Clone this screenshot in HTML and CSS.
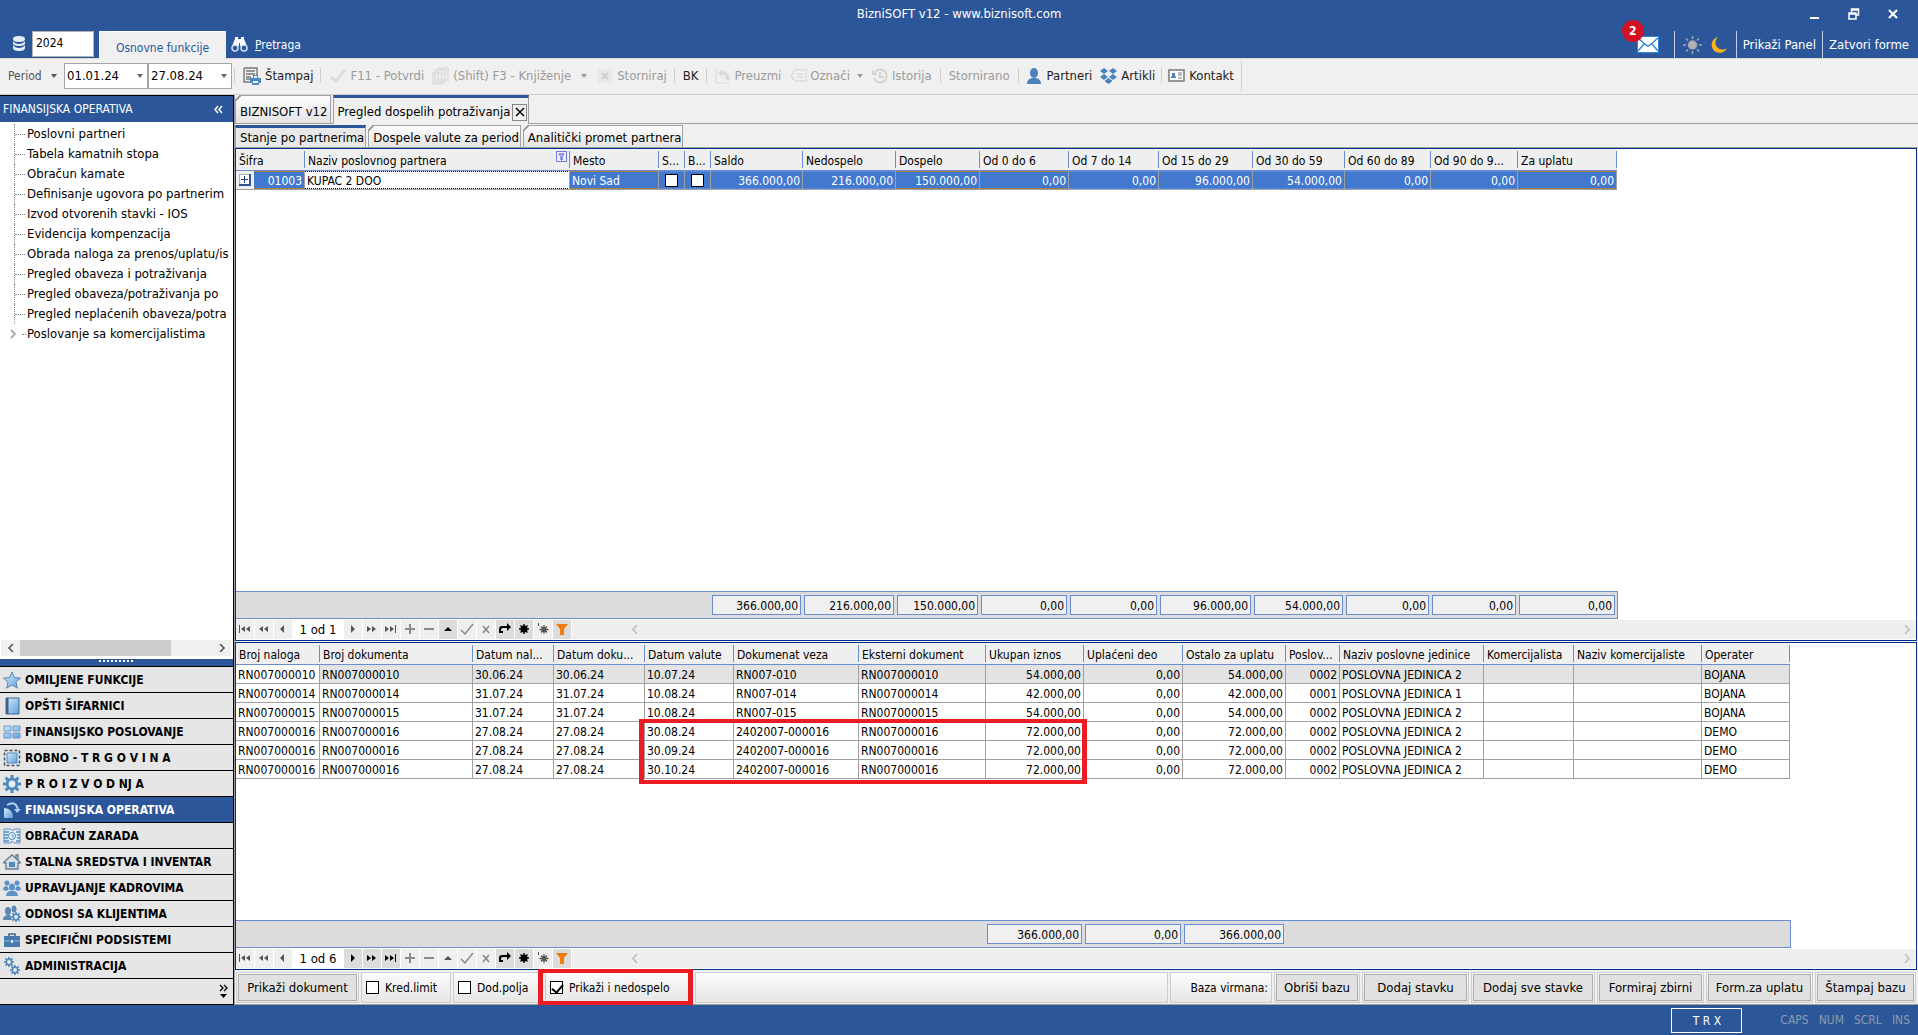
FILE: index.html
```html
<!DOCTYPE html>
<html lang="sr-Latn">
<head>
<meta charset="utf-8">
<title>BizniSOFT v12</title>
<link rel="stylesheet" href="styles.css">
</head>
<body>
<svg class="defs" aria-hidden="true">
  <defs>
    <linearGradient id="sky" x1="0" y1="0" x2="1" y2="1"><stop offset="0" stop-color="#d5eafb"/><stop offset="1" stop-color="#5d9fdc"/></linearGradient>
    <symbol id="n-first" viewBox="0 0 18 19"><path d="M3 5h1v8H3zM9 6v6L5 9zM14 6v6l-4-3z"/></symbol>
    <symbol id="n-pprev" viewBox="0 0 18 19"><path d="M8 6v6L4 9zM13 6v6L9 9z"/></symbol>
    <symbol id="n-prev" viewBox="0 0 18 19"><path d="M10 5v8L6 9z"/></symbol>
    <symbol id="n-next" viewBox="0 0 18 19"><path d="M7 5v8l4-4z"/></symbol>
    <symbol id="n-nnext" viewBox="0 0 18 19"><path d="M4 6v6l4-3zM9 6v6l4-3z"/></symbol>
    <symbol id="n-last" viewBox="0 0 18 19"><path d="M3 6v6l4-3zM8 6v6l4-3zM13 5h1v8h-1z"/></symbol>
    <symbol id="n-add" viewBox="0 0 18 19"><path d="M8 4h2v4h4v2h-4v4H8v-4H4V8h4z"/></symbol>
    <symbol id="n-del" viewBox="0 0 18 19"><path d="M4 8h10v2H4z"/></symbol>
    <symbol id="n-edit" viewBox="0 0 18 19"><path d="M5 11l4-4 4 4z"/></symbol>
    <symbol id="n-ok" viewBox="0 0 18 19"><path d="M3 10l4 4 8-10" fill="none" stroke="currentColor" stroke-width="1.5"/></symbol>
    <symbol id="n-x" viewBox="0 0 18 19"><path d="M6 6l6 7M12 6l-6 7" fill="none" stroke="currentColor" stroke-width="1.6"/></symbol>
    <symbol id="n-ref" viewBox="0 0 18 19"><path d="M3 13V9q0-3 3-3h5V3l4 4-4 4V8H7Q5 8 5 10v1h2v2z"/></symbol>
    <symbol id="n-star" viewBox="0 0 18 19"><path d="M9 4v10M4 9h10M5.500 5.500l7 7M12.500 5.500l-7 7" stroke="currentColor" stroke-width="1.4"/><circle cx="9" cy="9" r="3.500"/></symbol>
    <symbol id="n-goto" viewBox="0 0 18 19"><path d="M10 5v9M5.500 9.500h9M7 6.500l6 6M13 6.500l-6 6" stroke="currentColor" stroke-width="1.300"/><circle cx="10" cy="9.500" r="2.500"/><path d="M4 3h1v3H4z"/></symbol>
    <symbol id="n-flt" viewBox="0 0 18 19"><path d="M3 4h12l-4 5v6H7V9z" fill="#f07a10"/></symbol>
    <symbol id="gear" viewBox="0 0 18 18"><path d="M9 0v18M0 9h18M2.600 2.600l12.800 12.800M15.400 2.600L2.600 15.400" stroke="#4f89c0" stroke-width="3"/><circle cx="9" cy="9" r="4.800" fill="#e9eef3" stroke="#4f89c0" stroke-width="2.800"/></symbol>
    <symbol id="drop" viewBox="0 0 6 4"><path d="M0 0h6L3 4z" fill="currentColor"/></symbol>
  </defs>
</svg>
<div class="app">
  <header class="titlebar">
    <div class="caption">
      <h1>BizniSOFT v12 - www.biznisoft.com</h1>
      <div class="winbtns">
        <button type="button" aria-label="Minimize"><svg width="12" height="12"><path d="M1 9h9v2H1z" fill="#fff"/></svg></button>
        <button type="button" aria-label="Restore"><svg width="12" height="12" fill="none" stroke="#fff" stroke-width="1.500"><path d="M1 5h7v6H1zM1 6h7M3.500 4V1h7v6H8M3.500 2h7"/></svg></button>
        <button type="button" aria-label="Close"><svg width="12" height="12"><path d="M2 2l8 8M10 2l-8 8" stroke="#fff" stroke-width="2.200"/></svg></button>
      </div>
    </div>
    <div class="ribbon">
      <svg class="db" width="14" height="16" fill="#e8eef7"><path d="M1 3q0-3 6-3t6 3-6 3-6-3zM1 5q2 3 6 3t6-3v2q0 3-6 3T1 7zM1 9q2 3 6 3t6-3v3q0 3-6 3t-6-3z"/></svg>
      <select class="year" aria-label="Godina"><option>2024</option></select>
      <a class="rtab" href="#">Osnovne funkcije</a>
      <a class="search" href="#"><svg width="17" height="16" fill="#fff"><path d="M4 2V0h3v2h3V0h3v2l3 7H9V6H8v3H1z"/><circle cx="4" cy="11" r="3" fill="none" stroke="#c9dcf3" stroke-width="1.600"/><circle cx="13" cy="11" r="3" fill="none" stroke="#c9dcf3" stroke-width="1.600"/></svg><span><u>P</u>retraga</span></a>
      <div class="rright">
        <button type="button" class="mail" aria-label="Poruke"><svg width="22" height="17"><path d="M0 0h22v17H0z" fill="#2f86dd"/><path d="M1 1h20v15H1z" fill="#fff"/><path d="M1 2l8 7q2 2 4 0l8-7M1 15l6-7M21 15l-6-7" fill="none" stroke="#2f86dd" stroke-width="1.400"/></svg><span class="badge">2</span></button>
        <div class="theme">
          <svg width="19" height="18" stroke="#a5a9ad" stroke-width="1.500"><path d="M9.500 0v3M9.500 15v3M0 9h3M16 9h3M3 2.500l2 2M14 13.500l2 2M16 2.500l-2 2M5 13.500l-2 2"/><circle cx="9.500" cy="9" r="4" fill="#b3b3b3"/></svg>
          <svg width="17" height="16"><path d="M7 0A8 8 0 1 0 16 11A7 7 0 0 1 7 0z" fill="#fbb117"/></svg>
        </div>
        <button type="button" class="rbtn">Prikaži Panel</button>
        <button type="button" class="rbtn">Zatvori forme</button>
      </div>
    </div>
  </header>

  <div class="toolbar">
    <button type="button" class="period">Period <svg width="6" height="4"><use href="#drop"/></svg></button>
    <label class="date"><input type="text" value="01.01.24" aria-label="Od datuma"><svg width="6" height="4"><use href="#drop"/></svg></label>
    <label class="date"><input type="text" value="27.08.24" aria-label="Do datuma"><svg width="6" height="4"><use href="#drop"/></svg></label>
    <i class="sep"></i>
    <button type="button" class="t-stampaj"><svg width="18" height="18"><path d="M1 1h13v9M8 15H1V1" fill="none" stroke="#777" stroke-width="1.400"/><path d="M3 4h9M3 7h9M3 10h5M3 12h4" stroke="#777" stroke-width="1.400"/><path d="M10 8h5v3h3v5h-2v2H9v-2H7v-5h3z" fill="#4f89c0"/><path d="M11 9h3v2h-3zM10 14h5v2h-5z" fill="#eef4fa"/></svg>Štampaj</button>
    <i class="sep"></i>
    <button type="button" class="off t-potvrdi"><svg width="16" height="14"><path d="M1 8l5 4 9-11" fill="none" stroke="#dcdcdc" stroke-width="3"/></svg>F11 - Potvrdi</button>
    <button type="button" class="off t-knj"><svg width="17" height="18" fill="#f1f1f1" stroke="#dcdcdc" stroke-width="1.500"><path d="M6 1h10v12H6zM3 3h10v12H3zM1 6h9v11H1z"/></svg>(Shift) F3 - Knjiženje<svg class="dd" width="6" height="4"><use href="#drop"/></svg></button>
    <button type="button" class="off t-storn"><svg width="16" height="16"><path d="M1 1h14v14H1z" fill="#e8e8e8"/><path d="M5 5l6 6M11 5l-6 6" stroke="#cfcfcf" stroke-width="2"/></svg>Storniraj</button>
    <i class="sep"></i>
    <button type="button" class="t-bk">BK</button>
    <i class="sep"></i>
    <button type="button" class="off t-preuzmi"><svg width="16" height="16" fill="none" stroke="#dadada"><path d="M1 1v14h14"/><path d="M5 5q7-1 8 5" stroke-width="3"/><path d="M3 5l4-4v8zM9 9h7l-3 4z" fill="#dadada" stroke="none"/></svg>Preuzmi</button>
    <button type="button" class="off t-oznaci"><svg width="17" height="13" fill="none" stroke="#dcdcdc" stroke-width="1.500"><path d="M5 1h11v11H5L1 6.500zM7 5h6M7 8h6"/></svg>Označi<svg class="dd" width="6" height="4"><use href="#drop"/></svg></button>
    <button type="button" class="off t-ist"><svg width="16" height="16" fill="none" stroke="#d2d2d2" stroke-width="2"><path d="M3 4a6.500 6.500 0 1 1-1 6M8 4v5h4"/><path d="M0 2l6 5H0z" fill="#d2d2d2" stroke="none"/></svg>Istorija</button>
    <i class="sep"></i>
    <button type="button" class="off t-storno">Stornirano</button>
    <i class="sep"></i>
    <button type="button" class="t-part"><svg width="14" height="16" fill="#4a83bb"><ellipse cx="7" cy="5" rx="4" ry="5"/><path d="M0 16q0-5 5-6h4q5 1 5 6z"/></svg>Partneri</button>
    <button type="button" class="t-art"><svg width="17" height="16" fill="#4a83bb"><path d="M4 0l4 3-4 3-4-3zM13 0l4 3-4 3-4-3zM4 6l4 3-4 3-4-3zM13 6l4 3-4 3-4-3zM8.500 10l4 3-4 3-4-3z"/></svg>Artikli</button>
    <i class="sep"></i>
    <button type="button" class="t-kont"><svg width="17" height="13"><path d="M1 1h15v11H1z" fill="#fff" stroke="#777" stroke-width="1.500"/><path d="M3 9q0-2 1-2V4h3v3q1 0 1 2z" fill="#4a83bb"/><path d="M10 4h4M10 6h4M10 9h4" stroke="#777"/></svg>Kontakt</button>
    <i class="sep tall"></i>
  </div>

  <div class="work">
    <aside class="side">
      <h2>FINANSIJSKA OPERATIVA <svg width="9" height="9" fill="none" stroke="#fff" stroke-width="1.500"><path d="M4 1L1 4.500 4 8M8 1L5 4.500 8 8"/></svg></h2>
      <ul class="tree">
        <li><a href="#">Poslovni partneri</a></li>
        <li><a href="#">Tabela kamatnih stopa</a></li>
        <li><a href="#">Obračun kamate</a></li>
        <li><a href="#">Definisanje ugovora po partnerim</a></li>
        <li><a href="#">Izvod otvorenih stavki - IOS</a></li>
        <li><a href="#">Evidencija kompenzacija</a></li>
        <li><a href="#">Obrada naloga za prenos/uplatu/is</a></li>
        <li><a href="#">Pregled obaveza i potraživanja</a></li>
        <li><a href="#">Pregled obaveza/potraživanja po</a></li>
        <li><a href="#">Pregled neplaćenih obaveza/potra</a></li>
        <li class="node"><svg width="6" height="10"><path d="M1 1l4 4-4 4" fill="none" stroke="#aaa" stroke-width="1.800"/></svg><a href="#">Poslovanje sa komercijalistima</a></li>
      </ul>
      <div class="hscroll"><svg width="7" height="8"><path d="M6 0L2 4l4 4" fill="none" stroke="#555" stroke-width="1.600"/></svg><i></i><svg width="7" height="8"><path d="M1 0l4 4-4 4" fill="none" stroke="#555" stroke-width="1.600"/></svg></div>
      <div class="grip"><i></i></div>
      <nav class="groups">
        <button type="button"><svg width="18" height="18"><path d="M9 1l2.500 5.500 6 .6-4.500 4 1.300 6L9 14l-5.300 3.100L5 11.100.5 7.100l6-.6z" fill="url(#sky)" stroke="#5b86ae"/></svg>OMILJENE FUNKCIJE</button>
        <button type="button"><svg width="18" height="18"><path d="M3 1h13v16H3z" fill="url(#sky)" stroke="#456a8e"/><path d="M3 1h2.500v16H3z" fill="#3d6186"/></svg>OPŠTI ŠIFARNICI</button>
        <button type="button"><svg width="18" height="18" fill="url(#sky)" stroke="#6d9bc8"><path d="M1 3h7v5H1zM10 3h7v5h-7zM1 10h7v5H1zM10 10h7v5h-7z"/></svg>FINANSIJSKO POSLOVANJE</button>
        <button type="button"><svg width="18" height="18"><path d="M1.500 1.500h15v15h-15z" fill="none" stroke="#444e5a" stroke-width="1.500" stroke-dasharray="3 2"/><path d="M4 4h10v10H4z" fill="url(#sky)" stroke="#4f8ac4"/></svg>ROBNO - T R G O V I N A</button>
        <button type="button"><svg width="18" height="18"><use href="#gear"/></svg>P R O I Z V O D NJ A</button>
        <button type="button" class="on"><svg width="18" height="18"><path d="M1 7q9 0 9 10H1z" fill="url(#sky)"/><path d="M4 4q9-5 11 5" fill="none" stroke="#a9d1f3" stroke-width="2"/><path d="M11 8h7l-4 4z" fill="#a9d1f3"/></svg>FINANSIJSKA OPERATIVA</button>
        <button type="button"><svg width="18" height="18"><path d="M1 2h7l2 2 1-2h6v14h-6l-2-2-1 2H1z" fill="#dcecf9" stroke="#6d94b8"/><path d="M1 5h5M1 8h4M1 11h4M1 14h5M13 5h4M14 8h3M14 11h3M13 14h4" stroke="#4f89c0" stroke-width="1.500"/><circle cx="9" cy="9" r="3.500" fill="#f5f9fd" stroke="#4f89c0"/><path d="M8 8h2v3" fill="none" stroke="#4f89c0"/></svg>OBRAČUN ZARADA</button>
        <button type="button"><svg width="18" height="18"><path d="M13 5V2h2v5M1 9l8-7 8 7v1h-2v6H3v-6H1z" fill="#d7dde3" stroke="#6b7f93" stroke-width="1.400"/><path d="M6 9h6v5H6z" fill="#4f89c0"/></svg>STALNA SREDSTVA I INVENTAR</button>
        <button type="button"><svg width="18" height="18" fill="#5b92c8"><circle cx="4" cy="4" r="2.500"/><circle cx="14" cy="4" r="2.500"/><path d="M0 11q0-4 4-4l2 3-2 2zM18 11q0-4-4-4l-2 3 2 2z"/><ellipse cx="9" cy="8" rx="3" ry="3.500"/><path d="M3 17q0-4 4-5h4q4 1 4 5z"/></svg>UPRAVLJANJE KADROVIMA</button>
        <button type="button"><svg width="18" height="18"><g fill="#5b87b2"><ellipse cx="5" cy="6" rx="3" ry="4"/><path d="M0 15q0-4 4-5h3l2 5z"/><ellipse cx="11" cy="4" rx="2.500" ry="3.500"/></g><svg x="8" y="7" width="10" height="10"><use href="#gear"/></svg></svg>ODNOSI SA KLIJENTIMA</button>
        <button type="button"><svg width="18" height="18"><path d="M6 5V3h6v2" fill="none" stroke="#3f6790" stroke-width="1.500"/><path d="M1 5h16v11H1z" fill="#4679ad"/><path d="M1 10h16" stroke="#8fb4d8"/><path d="M8 9h2v3H8z" fill="#d5e6f5"/></svg>SPECIFIČNI PODSISTEMI</button>
        <button type="button"><svg width="18" height="18"><svg x="1" y="0" width="10" height="10"><use href="#gear"/></svg><svg x="7" y="8" width="10" height="10"><use href="#gear"/></svg></svg>ADMINISTRACIJA</button>
      </nav>
      <div class="more"><svg width="9" height="16"><path d="M1 2l3 3-3 3M5 2l3 3-3 3" fill="none" stroke="#000" stroke-width="1.300"/><path d="M1 11h7l-3.500 4z"/></svg></div>
    </aside>

    <main class="main">
      <div class="doctabs">
        <button type="button" class="tab">BIZNISOFT v12</button>
        <div class="tab on">Pregled dospelih potraživanja<button type="button" class="close" aria-label="Zatvori"><svg width="10" height="10"><path d="M1 1l8 8M9 1l-8 8" stroke="#000" stroke-width="1.500"/></svg></button></div>
      </div>
      <div class="viewtabs">
        <button type="button" class="tab on">Stanje po partnerima</button>
        <button type="button" class="tab">Dospele valute za period</button>
        <button type="button" class="tab">Analitički promet partnera</button>
      </div>

      <section class="pane top">
        <div class="rows">
          <table class="partners">
            <colgroup><col><col><col><col><col><col><col><col><col><col><col><col><col><col><col></colgroup>
            <thead><tr><th>Šifra</th><th>Naziv poslovnog partnera<svg class="flt" width="11" height="11"><path d="M.5.5h10v10H.5z" fill="#eef" stroke="#6a7be0"/><path d="M3 3h5L6 5.500V9H5V5.500z" fill="none" stroke="#4356d8"/></svg></th><th>Mesto</th><th>S...</th><th>B...</th><th>Saldo</th><th>Nedospelo</th><th>Dospelo</th><th>Od 0 do 6</th><th>Od 7 do 14</th><th>Od 15 do 29</th><th>Od 30 do 59</th><th>Od 60 do 89</th><th>Od 90 do 9...</th><th>Za uplatu</th></tr></thead>
            <tbody><tr><td class="code"><span><button type="button" aria-label="Proširi"><svg width="12" height="12"><path d="M0 0h12v12H0z" fill="#31548c"/><path d="M0 0h10v10H0z" fill="#9fb3cf"/><path d="M1 1h9v9H1z" fill="#fff"/><path d="M5 2h1v3h3v1H6v3H5V6H2V5h3z" fill="#1c3f78"/></svg></button>01003</span></td><td class="edit">KUPAC 2 DOO</td><td>Novi Sad</td><td class="ck"><input type="checkbox" aria-label="S"></td><td class="ck"><input type="checkbox" aria-label="B"></td><td class="n">366.000,00</td><td class="n">216.000,00</td><td class="n">150.000,00</td><td class="n">0,00</td><td class="n">0,00</td><td class="n">96.000,00</td><td class="n">54.000,00</td><td class="n">0,00</td><td class="n">0,00</td><td class="n">0,00</td></tr></tbody>
          </table>
        </div>
        <table class="partners sum">
          <colgroup><col><col><col><col><col><col><col><col><col><col><col><col><col><col><col></colgroup>
          <tbody><tr><td colspan="5"></td><td><span>366.000,00</span></td><td><span>216.000,00</span></td><td><span>150.000,00</span></td><td><span>0,00</span></td><td><span>0,00</span></td><td><span>96.000,00</span></td><td><span>54.000,00</span></td><td><span>0,00</span></td><td><span>0,00</span></td><td><span>0,00</span></td></tr></tbody>
        </table>
        <div class="navi">
          <button type="button" aria-label="Prvi"><svg><use href="#n-first"/></svg></button><button type="button" aria-label="Strana nazad"><svg><use href="#n-pprev"/></svg></button><button type="button" aria-label="Prethodni"><svg><use href="#n-prev"/></svg></button><span>1 od 1</span><button type="button" aria-label="Sledeći"><svg><use href="#n-next"/></svg></button><button type="button" aria-label="Strana napred"><svg><use href="#n-nnext"/></svg></button><button type="button" aria-label="Poslednji"><svg><use href="#n-last"/></svg></button><button type="button" class="dim" aria-label="Dodaj"><svg><use href="#n-add"/></svg></button><button type="button" class="dim" aria-label="Obriši"><svg><use href="#n-del"/></svg></button><button type="button" class="act" aria-label="Izmeni"><svg><use href="#n-edit"/></svg></button><button type="button" class="dim" aria-label="Potvrdi"><svg><use href="#n-ok"/></svg></button><button type="button" class="dim" aria-label="Otkaži"><svg><use href="#n-x"/></svg></button><button type="button" class="act" aria-label="Osveži"><svg><use href="#n-ref"/></svg></button><button type="button" class="act" aria-label="Obeleži"><svg><use href="#n-star"/></svg></button><button type="button" aria-label="Idi na oznaku"><svg><use href="#n-goto"/></svg></button><button type="button" class="act" aria-label="Filter"><svg><use href="#n-flt"/></svg></button>
          <div class="hbar"><svg width="6" height="9"><path d="M5 0L1 4.500 5 9" fill="none" stroke="#bbb" stroke-width="1.500"/></svg><svg width="6" height="9"><path d="M1 0l4 4.500L1 9" fill="none" stroke="#bbb" stroke-width="1.500"/></svg></div>
        </div>
      </section>

      <section class="pane bottom">
        <div class="rows">
          <table class="items">
            <colgroup><col><col><col><col><col><col><col><col><col><col><col><col><col><col><col></colgroup>
            <thead><tr><th>Broj naloga</th><th>Broj dokumenta</th><th>Datum nal...</th><th>Datum doku...</th><th>Datum valute</th><th>Dokumenat veza</th><th>Eksterni dokument</th><th>Ukupan iznos</th><th>Uplaćeni deo</th><th>Ostalo za uplatu</th><th>Poslov...</th><th>Naziv poslovne jedinice</th><th>Komercijalista</th><th>Naziv komercijaliste</th><th>Operater</th></tr></thead>
            <tbody>
              <tr class="cur"><td>RN007000010</td><td>RN007000010</td><td>30.06.24</td><td>30.06.24</td><td>10.07.24</td><td>RN007-010</td><td>RN007000010</td><td class="n">54.000,00</td><td class="n">0,00</td><td class="n">54.000,00</td><td class="n">0002</td><td>POSLOVNA JEDINICA 2</td><td></td><td></td><td>BOJANA</td></tr>
              <tr><td>RN007000014</td><td>RN007000014</td><td>31.07.24</td><td>31.07.24</td><td>10.08.24</td><td>RN007-014</td><td>RN007000014</td><td class="n">42.000,00</td><td class="n">0,00</td><td class="n">42.000,00</td><td class="n">0001</td><td>POSLOVNA JEDINICA 1</td><td></td><td></td><td>BOJANA</td></tr>
              <tr><td>RN007000015</td><td>RN007000015</td><td>31.07.24</td><td>31.07.24</td><td>10.08.24</td><td>RN007-015</td><td>RN007000015</td><td class="n">54.000,00</td><td class="n">0,00</td><td class="n">54.000,00</td><td class="n">0002</td><td>POSLOVNA JEDINICA 2</td><td></td><td></td><td>BOJANA</td></tr>
              <tr><td>RN007000016</td><td>RN007000016</td><td>27.08.24</td><td>27.08.24</td><td>30.08.24</td><td>2402007-000016</td><td>RN007000016</td><td class="n">72.000,00</td><td class="n">0,00</td><td class="n">72.000,00</td><td class="n">0002</td><td>POSLOVNA JEDINICA 2</td><td></td><td></td><td>DEMO</td></tr>
              <tr><td>RN007000016</td><td>RN007000016</td><td>27.08.24</td><td>27.08.24</td><td>30.09.24</td><td>2402007-000016</td><td>RN007000016</td><td class="n">72.000,00</td><td class="n">0,00</td><td class="n">72.000,00</td><td class="n">0002</td><td>POSLOVNA JEDINICA 2</td><td></td><td></td><td>DEMO</td></tr>
              <tr><td>RN007000016</td><td>RN007000016</td><td>27.08.24</td><td>27.08.24</td><td>30.10.24</td><td>2402007-000016</td><td>RN007000016</td><td class="n">72.000,00</td><td class="n">0,00</td><td class="n">72.000,00</td><td class="n">0002</td><td>POSLOVNA JEDINICA 2</td><td></td><td></td><td>DEMO</td></tr>
            </tbody>
          </table>
          <div class="mark"></div>
        </div>
        <table class="items sum">
          <colgroup><col><col><col><col><col><col><col><col><col><col><col><col><col><col><col></colgroup>
          <tbody><tr><td colspan="7"></td><td><span>366.000,00</span></td><td><span>0,00</span></td><td><span>366.000,00</span></td><td colspan="5"></td></tr></tbody>
        </table>
        <div class="navi">
          <button type="button" aria-label="Prvi"><svg><use href="#n-first"/></svg></button><button type="button" aria-label="Strana nazad"><svg><use href="#n-pprev"/></svg></button><button type="button" aria-label="Prethodni"><svg><use href="#n-prev"/></svg></button><span>1 od 6</span><button type="button" class="act" aria-label="Sledeći"><svg><use href="#n-next"/></svg></button><button type="button" class="act" aria-label="Strana napred"><svg><use href="#n-nnext"/></svg></button><button type="button" class="act" aria-label="Poslednji"><svg><use href="#n-last"/></svg></button><button type="button" class="dim" aria-label="Dodaj"><svg><use href="#n-add"/></svg></button><button type="button" class="dim" aria-label="Obriši"><svg><use href="#n-del"/></svg></button><button type="button" aria-label="Izmeni"><svg><use href="#n-edit"/></svg></button><button type="button" class="dim" aria-label="Potvrdi"><svg><use href="#n-ok"/></svg></button><button type="button" class="dim" aria-label="Otkaži"><svg><use href="#n-x"/></svg></button><button type="button" class="act" aria-label="Osveži"><svg><use href="#n-ref"/></svg></button><button type="button" class="act" aria-label="Obeleži"><svg><use href="#n-star"/></svg></button><button type="button" aria-label="Idi na oznaku"><svg><use href="#n-goto"/></svg></button><button type="button" class="act" aria-label="Filter"><svg><use href="#n-flt"/></svg></button>
          <div class="hbar"><svg width="6" height="9"><path d="M5 0L1 4.500 5 9" fill="none" stroke="#bbb" stroke-width="1.500"/></svg><svg width="6" height="9"><path d="M1 0l4 4.500L1 9" fill="none" stroke="#bbb" stroke-width="1.500"/></svg></div>
        </div>
      </section>

      <div class="actions">
        <div class="cell c-dok"><button type="button">Prikaži dokument</button></div>
        <label class="cell c-kred"><input type="checkbox">Kred.limit</label>
        <label class="cell c-kred"><input type="checkbox">Dod.polja</label>
        <label class="cell c-ned"><input type="checkbox" checked>Prikaži i nedospelo</label>
        <div class="cell fill"></div>
        <div class="cell c-vir">Baza virmana:</div>
        <div class="cell c-b0"><button type="button">Obriši bazu</button></div>
        <div class="cell c-b2"><button type="button">Dodaj stavku</button></div>
        <div class="cell c-b3"><button type="button">Dodaj sve stavke</button></div>
        <div class="cell c-b2"><button type="button">Formiraj zbirni</button></div>
        <div class="cell c-b2"><button type="button">Form.za uplatu</button></div>
        <div class="cell c-b1"><button type="button">Štampaj bazu</button></div>
      </div>
    </main>
  </div>

  <footer class="status">
    <span class="trx">T R X</span><span class="st"></span><span class="st">CAPS</span><span class="st">NUM</span><span class="st">SCRL</span><span class="st">INS</span>
  </footer>
</div>
</body>
</html>
```
FILE: styles.css
```css
* { box-sizing: border-box; }
:root {
  --blue: #2b579a;
  --line: #6b8ed0;
  --navy: #00308c;
  --face: #f0f0f0;
}
body {
  margin: 0;
  font: 12px/16px "DejaVu Sans Condensed", "Noto Sans", sans-serif;
  color: #000;
  background: var(--face);
}
button, input, select { font: inherit; color: inherit; margin: 0; padding: 0; border: 0; background: none; border-radius: 0; }
a { color: inherit; text-decoration: none; }
h1, h2, ul { margin: 0; padding: 0; font-weight: normal; list-style: none; }
svg { display: block; flex: none; }
.defs { position: absolute; width: 0; height: 0; }
.app { display: flex; flex-direction: column; min-height: 100vh; }

/* title bar and ribbon */
.titlebar { background: var(--blue); color: #fff; border-bottom: 1px solid #d8d8d8; }
.caption { display: grid; grid-template-columns: 1fr auto 1fr; align-items: center; height: 28px; }
.caption h1 { grid-column: 2; font-size: 13px; line-height: 16px; }
.winbtns { display: flex; justify-content: flex-end; gap: 27px; padding-right: 19px; }
.ribbon { display: flex; align-items: flex-end; height: 30px; }
.db { margin: 0 6px 6px 12px; }
.year { appearance: none; width: 62px; height: 26px; padding: 0 3px 2px; background: #fff; border: 1px solid #b0b0b0; color: #000; margin-bottom: 1px; margin-right: 5px; }
.rtab { width: 127px; height: 28px; background: var(--face); color: var(--blue); text-align: center; line-height: 33px; border-top: 1px solid #fff; margin-bottom: -1px; }
.search { display: flex; align-items: center; gap: 7px; margin: 0 0 5px 5px; }
.rright { margin-left: auto; display: flex; align-items: center; height: 27px; }
.mail { position: relative; margin-right: 15px; }
.badge { position: absolute; left: -15px; top: -16px; width: 22px; height: 22px; border-radius: 50%; background: #d01224; color: #fff; font-weight: bold; line-height: 22px; }
.theme { display: flex; align-items: center; gap: 9px; height: 27px; padding: 0 8px; border-left: 1px solid #c3cfe2; }
.rbtn { height: 27px; padding: 0 6px; border-left: 1px solid #c3cfe2; font-size: 13px; }
.rbtn:last-child { padding-right: 9px; }

/* toolbar */
.toolbar { display: flex; align-items: center; height: 36px; padding: 0 0 2px 8px; border-bottom: 1px solid #d0d0d0; color: #222; }
.toolbar button { display: flex; align-items: center; gap: 4px; white-space: nowrap; font-size: 13px; }
.toolbar .off { color: #9a9a9a; }
.toolbar .period { width: 56px; gap: 9px; color: #555; font-size: 12px; }
.date { display: flex; align-items: center; justify-content: space-between; width: 84px; height: 26px; padding: 0 4px 0 2px; background: #fff; border: 1px solid #a5a5a5; color: #666; }
.date input { width: 60px; color: #000; font-size: 13px; }
.sep { width: 1px; height: 15px; background: #cfcfcf; }
.date + .sep { margin-left: 2px; }
.sep.tall { height: 30px; margin-left: 7px; }
.toolbar .dd { margin-left: 6px; }
.t-stampaj { margin: 0 7px 0 8px; }
.t-potvrdi { margin: 0 8px 0 9px; }
.t-knj { margin-right: 10px; }
.t-storn { margin-right: 7px; }
.t-bk { margin: 0 7px 0 8px; }
.t-preuzmi { margin: 0 9px 0 8px; }
.toolbar .t-oznaci { margin-right: 9px; gap: 3px; }
.t-oznaci .dd { margin-left: 4px; }
.t-ist { margin-right: 8px; }
.t-storno { margin: 0 8px; }
.toolbar .t-part { margin: 0 8px; gap: 6px; }
.t-art { margin-right: 6px; }
.t-kont { margin-left: 6px; }

/* sidebar */
.work { display: flex; flex: 1; }
.side { display: flex; flex-direction: column; width: 234px; flex: none; background: #fff; border-top: 1px solid #000; border-right: 1px solid #000; }
.side h2 { display: flex; align-items: center; justify-content: space-between; height: 26px; padding: 0 10px 0 3px; background: var(--blue); color: #fff; font-size: 12px; }
.tree { flex: 1; padding: 2px 2px 0 14px; font-size: 13px; }
.tree li { display: flex; align-items: center; height: 20px; white-space: nowrap; border-left: 1px dotted #888; }
.tree li::before { content: ""; width: 10px; margin-right: 2px; border-top: 1px dotted #888; flex: none; }
.tree .node { border: 0; margin-left: -4px; gap: 5px; }
.tree .node::before { order: 1; width: 4px; margin: 0 -4px 0 1px; }
.tree .node a { order: 2; }
.hscroll { display: grid; grid-template-columns: 19px 5fr 2fr; align-items: center; height: 16px; margin: 0 2px 3px 1px; background: #f0f0f0; }
.hscroll svg { justify-self: center; }
.hscroll svg:last-child { justify-self: end; margin-right: 5px; }
.hscroll i { height: 16px; background: #cdcdcd; }
.grip { display: flex; justify-content: center; height: 7px; padding-top: 1px; background: var(--blue); }
.grip i { width: 35px; height: 2px; background: repeating-linear-gradient(90deg, #fff 0 2px, transparent 2px 4px); }
.groups button { display: flex; align-items: center; gap: 4px; width: 100%; height: 26px; padding-left: 3px; background: #e6e6e6; border-top: 1px solid #000; font-weight: bold; }
.groups .on { background: var(--blue); color: #fff; }
.more { display: flex; justify-content: flex-end; height: 27px; padding: 4px 5px 0 0; background: #e6e6e6; border-top: 1px solid #000; border-bottom: 1px solid #000; }

/* tabs */
.main { flex: 1; min-width: 0; display: flex; flex-direction: column; border-left: 1px solid #a0a0a0; }
.doctabs, .viewtabs { display: flex; gap: 2px; border-bottom: 1px solid #a0a0a0; }
.doctabs { height: 29px; }
.viewtabs { height: 24px; padding-top: 1px; }
.tab { position: relative; display: flex; align-items: center; white-space: nowrap; background: linear-gradient(#fcfcfc, #e4e4e4); border: 1px solid #a0a0a0; border-bottom: 0; padding: 4px 3px 0 4px; font-size: 13px; }
.tab:not(.on)::before { content: ""; position: absolute; left: -1px; top: -1px; width: 6px; height: 6px; background: linear-gradient(135deg, #f0f0f0 3px, #a0a0a0 3px 5px, transparent 5px); }
.doctabs .on { background: var(--face); border-top: 3px solid var(--blue); margin-bottom: -1px; padding: 2px 1px 0 3px; gap: 2px; }
.viewtabs .tab { padding: 2px 1px 0 4px; }
.viewtabs .on { background: #e8e8e8; border-top: 3px solid var(--blue); padding-top: 0; }
.close { display: grid; place-items: center; width: 15px; height: 17px; border: 1px solid #888; }

/* grids */
.pane { display: flex; flex-direction: column; background: #fff; border: 1px solid var(--navy); margin-right: 1px; }
.pane.top { flex: 1; }
.pane.bottom { flex: 0 0 328px; margin-top: 1px; }
.rows { flex: 1; position: relative; }
table { table-layout: fixed; border-collapse: separate; border-spacing: 0; }
.partners { width: 1381px; }
.items { width: 1554px; }
th, td { padding: 0 2px; overflow: hidden; white-space: nowrap; text-align: left; font-weight: normal; }
th { position: relative; height: 22px; padding: 2px 3px 0; background: linear-gradient(var(--line), var(--line)) right 2px / 1px 17px no-repeat, #efefef; border-bottom: 1px solid var(--line); }
.flt { position: absolute; right: 3px; top: 2px; }
td { height: 19px; padding-top: 2px; line-height: 16px; border-right: 1px solid #a0a0a0; border-bottom: 1px solid #a0a0a0; }
td.n { text-align: right; }
.partners:not(.sum) td { --dots: #b98a4e; --fill: #4279cf; color: #fff; background: repeating-linear-gradient(90deg, var(--dots) 0 1px, var(--fill) 1px 2px) 0 0 / 100% 1px no-repeat, repeating-linear-gradient(90deg, var(--dots) 0 1px, var(--fill) 1px 2px) 0 100% / 100% 1px no-repeat, var(--fill); }
.partners:not(.sum) td.edit { --dots: #000; --fill: #fff; color: #000; }
.partners td.code { padding: 0 2px 0 0; }
.code span { display: flex; justify-content: space-between; align-items: center; height: 18px; padding-top: 1px; }
.code button { display: grid; place-items: center; width: 18px; height: 18px; margin-top: -1px; background: #f0f0f0; }
.ck { text-align: center; }
.partners td.ck { padding-top: 0; }
.ck input { vertical-align: middle; }
input[type=checkbox] { appearance: none; width: 13px; height: 13px; border: 1px solid #000; background: #fff; flex: none; }
input[type=checkbox]:checked { position: relative; }
input[type=checkbox]:checked::after { content: ""; position: absolute; left: 3px; top: 0; width: 5px; height: 9px; border: solid #000; border-width: 0 2px 2px 0; transform: rotate(40deg); }
.cur td { background: #e3e3e3; }
.cur td:first-child { background: #fff; }
.mark { position: absolute; left: 403px; top: 76px; width: 448px; height: 65px; border: 5px solid #ed1c24; border-width: 4px 5px; }

.partners col:nth-child(1) { width: 69px; } .partners col:nth-child(2) { width: 265px; }
.partners col:nth-child(3) { width: 89px; } .partners col:nth-child(4) { width: 26px; }
.partners col:nth-child(5) { width: 26px; } .partners col:nth-child(6) { width: 92px; }
.partners col:nth-child(7) { width: 93px; } .partners col:nth-child(8) { width: 84px; }
.partners col:nth-child(9) { width: 89px; } .partners col:nth-child(10) { width: 90px; }
.partners col:nth-child(11) { width: 94px; } .partners col:nth-child(12) { width: 92px; }
.partners col:nth-child(13) { width: 86px; } .partners col:nth-child(14) { width: 87px; }
.partners col:nth-child(15) { width: 99px; }
.items col:nth-child(1) { width: 84px; } .items col:nth-child(2) { width: 153px; }
.items col:nth-child(3) { width: 81px; } .items col:nth-child(4) { width: 91px; }
.items col:nth-child(5) { width: 89px; } .items col:nth-child(6) { width: 125px; }
.items col:nth-child(7) { width: 127px; } .items col:nth-child(8) { width: 98px; }
.items col:nth-child(9) { width: 99px; } .items col:nth-child(10) { width: 103px; }
.items col:nth-child(11) { width: 54px; } .items col:nth-child(12) { width: 144px; }
.items col:nth-child(13) { width: 90px; } .items col:nth-child(14) { width: 128px; }
.items col:nth-child(15) { width: 88px; }

.sum { background: #dcdcdc; border: 1px solid var(--line); border-left: 0; }
.sum td { height: 26px; padding: 0 2px 0 1px; border: 0; }
.sum span { display: block; height: 20px; padding: 1px 2px 0; line-height: 18px; text-align: right; background: var(--face); border: 1px solid var(--line); }

/* record navigator */
.navi { display: flex; gap: 1px; height: 20px; margin-top: 1px; padding-bottom: 1px; }
.navi button { width: 18px; height: 19px; background: #efefef; color: #555; }
.navi svg { width: 18px; height: 19px; fill: currentColor; }
.navi .dim { color: #8a8a8a; }
.navi .act { background: #dcdcdc; color: #000; }
.navi > span { width: 50px; text-align: center; font-size: 13px; line-height: 19px; }
.hbar { flex: 1; display: flex; align-items: center; justify-content: space-between; padding: 0 6px 0 60px; background: #efefef; }
.hbar svg { width: 6px; height: 9px; }

/* action bar */
.actions { display: flex; gap: 2px; height: 35px; padding: 2px 2px 1px 1px; border-bottom: 1px solid #a0a0a0; }
.cell { position: relative; display: flex; align-items: center; padding: 1px; background: linear-gradient(#fbfbfb, #e6e6e6); border: 1px solid #cdcdcd; white-space: nowrap; }
.cell > button { width: 100%; height: 27px; background: #e1e1e1; border: 1px solid #adadad; font-size: 13px; }
label.cell { padding-left: 4px; gap: 6px; }
.c-dok { width: 123px; }
.c-kred { width: 90px; }
.c-ned { width: 148px; }
.c-ned::after { content: ""; position: absolute; left: -8px; right: -1px; top: -4px; bottom: -3px; border: 5px solid #ed1c24; border-width: 4px 5px; }
.fill { flex: 1; }
.cell.c-vir { width: 102px; justify-content: flex-end; padding-right: 3px; }
.c-b0 { width: 86px; }
.c-b1 { width: 101px; }
.c-b2 { width: 107px; }
.c-b3 { width: 124px; }

/* status bar */
.status { display: flex; align-items: center; justify-content: flex-end; height: 30px; padding-right: 3px; background: var(--blue); color: #8e9aab; }
.trx { width: 71px; height: 25px; border: 1px solid #fff; color: #fff; text-align: center; line-height: 24px; }
.st { padding: 0 5px; }
.st:nth-child(2) { width: 33px; }
```
